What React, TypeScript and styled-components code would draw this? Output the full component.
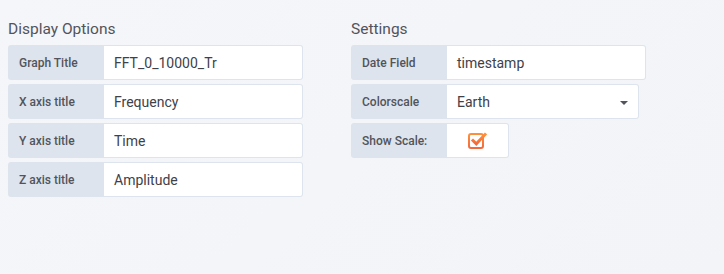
import React from "react";
import styled, { createGlobalStyle } from "styled-components";

const Global = createGlobalStyle`
  html, body { margin: 0; padding: 0; background: #f4f5f8; }
  body { font-family: Roboto, "Noto Sans", sans-serif; width: 724px; height: 274px; overflow: hidden; }
`;

const Page = styled.div`
  display: flex;
  gap: 48px;
  padding: 19px 8px 0 8px;
  background: linear-gradient(135deg, #f5f6f9 0%, #f3f4f8 100%);
  height: 274px;
  box-sizing: border-box;
`;

const Section = styled.div<{ $w: number }>`
  width: ${(p) => p.$w}px;
  display: flex;
  flex-direction: column;
  gap: 4px;
`;

const Heading = styled.h5`
  margin: 0 0 2px 0;
  font-size: 15.5px;
  font-weight: 400;
  line-height: 20px;
  color: #52545c;
`;

const Row = styled.div`
  display: flex;
  height: 35px;
`;

const Label = styled.div`
  width: 96px;
  flex: none;
  box-sizing: border-box;
  background: #dde4ed;
  border-radius: 3px 0 0 3px;
  padding-left: 11px;
  display: flex;
  align-items: center;
  font-size: 12px;
  font-weight: 500;
  color: #52545c;
`;

const Field = styled.div<{ $w: number }>`
  width: ${(p) => p.$w}px;
  box-sizing: border-box;
  background: #fff;
  border: 1px solid #dde4ed;
  border-left: none;
  border-radius: 0 3px 3px 0;
  display: flex;
  align-items: center;
  padding: 0 10px;
  font-size: 14px;
  color: #3f4148;
  position: relative;
`;

const CheckField = styled(Field)`
  justify-content: center;
`;

const Caret = styled.span`
  position: absolute;
  right: 10px;
  top: 16px;
  width: 0;
  height: 0;
  border-left: 4px solid transparent;
  border-right: 4px solid transparent;
  border-top: 4px solid #52545c;
`;

const Check = () => (
  <svg width="19" height="19" viewBox="0 0 19 19">
    <defs>
      <linearGradient id="cg" x1="0" y1="0" x2="0" y2="1">
        <stop offset="0" stopColor="#ff8f3c" />
        <stop offset="1" stopColor="#f26a3d" />
      </linearGradient>
    </defs>
    <rect x="1" y="3" width="14" height="14" rx="2" fill="none" stroke="url(#cg)" strokeWidth="2" />
    <path d="M5 9.5 L8.3 12.8 L17 3.5" fill="none" stroke="url(#cg)" strokeWidth="3" strokeLinecap="square" />
  </svg>
);

export default function App() {
  return (
    <>
      <Global />
      <Page>
        <Section $w={295}>
          <Heading>Display Options</Heading>
          <Row>
            <Label>Graph Title</Label>
            <Field $w={199}>FFT_0_10000_Tr</Field>
          </Row>
          <Row>
            <Label>X axis title</Label>
            <Field $w={199}>Frequency</Field>
          </Row>
          <Row>
            <Label>Y axis title</Label>
            <Field $w={199}>Time</Field>
          </Row>
          <Row>
            <Label>Z axis title</Label>
            <Field $w={199}>Amplitude</Field>
          </Row>
        </Section>
        <Section $w={296}>
          <Heading>Settings</Heading>
          <Row>
            <Label>Date Field</Label>
            <Field $w={199}>timestamp</Field>
          </Row>
          <Row>
            <Label>Colorscale</Label>
            <Field $w={192}>
              Earth
              <Caret />
            </Field>
          </Row>
          <Row>
            <Label>Show Scale:</Label>
            <CheckField $w={62}>
              <Check />
            </CheckField>
          </Row>
        </Section>
      </Page>
    </>
  );
}
